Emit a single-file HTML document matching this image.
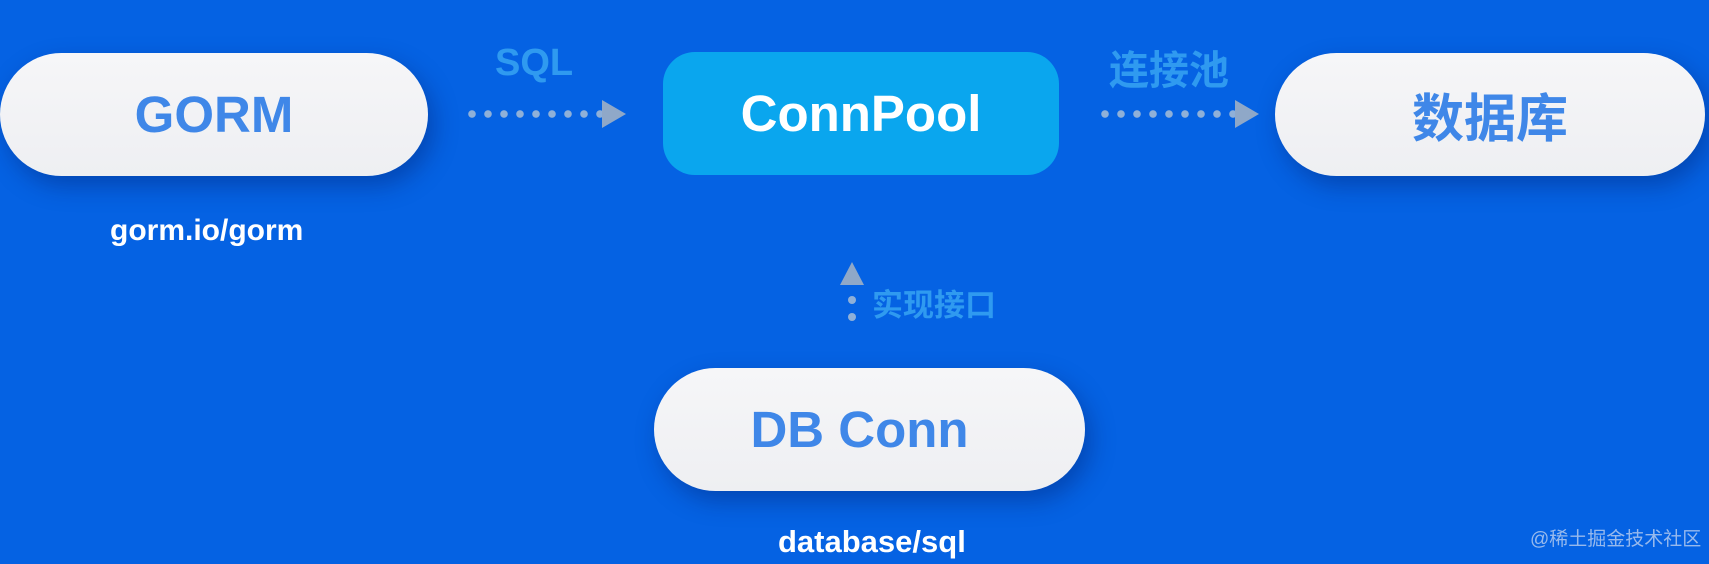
<!DOCTYPE html>
<html><head><meta charset="utf-8"><style>
*{margin:0;padding:0;box-sizing:border-box}
body{width:1709px;height:564px;overflow:hidden;background:#0562e3;font-family:"Liberation Sans","Noto Sans CJK SC",sans-serif;position:relative}
.pill{position:absolute;background:linear-gradient(#f6f6f8,#eeeff2);border-radius:62px;display:flex;align-items:center;justify-content:center;color:#3f87e8;font-weight:bold;font-size:51px;box-shadow:6px 10px 24px rgba(0,20,90,.35)}
.t{position:absolute;font-weight:bold;white-space:nowrap}
.lbl{color:#2f9af0;font-size:38px}
.dots{position:absolute;height:8px;background:radial-gradient(circle,#8fb0d8 3.5px,transparent 4px) 0 0/16px 8px repeat-x}
.tri{position:absolute;width:0;height:0}
</style></head><body>
<div class="pill" style="left:0;top:53px;width:428px;height:123px;">GORM</div>
<div class="t" style="left:110px;top:214px;font-size:30px;color:#fff">gorm.io/gorm</div>
<div class="t lbl" style="left:495px;top:42px">SQL</div>
<div class="dots" style="left:464px;top:110px;width:144px"></div>
<div class="tri" style="left:602px;top:100px;border-left:24px solid #8fa8c8;border-top:14px solid transparent;border-bottom:14px solid transparent"></div>
<div class="pill" style="left:663px;top:52px;width:396px;height:123px;border-radius:32px;background:#0aa6ee;color:#fff;box-shadow:none">ConnPool</div>
<div class="t lbl" style="left:1109px;top:38px;font-size:40px">连接池</div>
<div class="dots" style="left:1097px;top:110px;width:144px"></div>
<div class="tri" style="left:1235px;top:100px;border-left:24px solid #8fa8c8;border-top:14px solid transparent;border-bottom:14px solid transparent"></div>
<div class="pill" style="left:1275px;top:53px;width:430px;height:123px;font-size:52px">数据库</div>
<div class="tri" style="left:840px;top:262px;border-bottom:23px solid #8fa8c8;border-left:12px solid transparent;border-right:12px solid transparent"></div>
<div style="position:absolute;left:848px;top:296px;width:8px;height:8px;border-radius:50%;background:#8fb0d8"></div>
<div style="position:absolute;left:848px;top:313px;width:8px;height:8px;border-radius:50%;background:#8fb0d8"></div>
<div class="t lbl" style="left:872px;top:280px;font-size:31px">实现接口</div>
<div class="pill" style="left:654px;top:368px;width:431px;height:123px;padding-right:20px">DB Conn</div>
<div class="t" style="left:778px;top:524px;font-size:31px;color:#fff">database/sql</div>
<div class="t" style="left:1530px;top:524px;font-size:19px;font-weight:normal;color:rgba(200,215,240,.75)">@稀土掘金技术社区</div>
</body></html>
